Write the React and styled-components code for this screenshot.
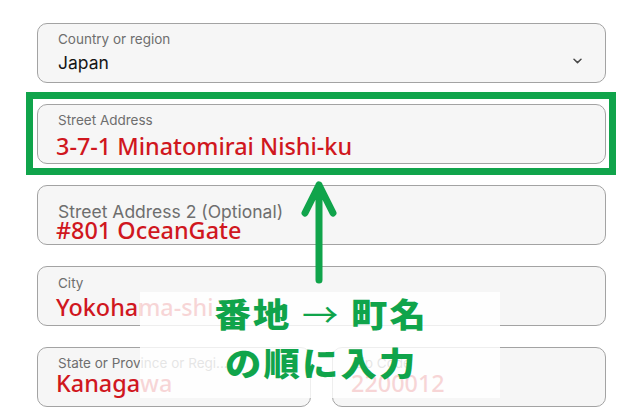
import React from 'react'
import styled, { createGlobalStyle } from 'styled-components'

const GlobalStyle = createGlobalStyle`
    html, body {
        margin: 0;
        padding: 0;
        background: #ffffff;
    }
    body {
        font-family: Inter, "Liberation Sans", sans-serif;
    }
`

const Page = styled.div`
    position: relative;
    width: 640px;
    height: 419px;
    overflow: hidden;
    padding: 23px 0 0 37px;
    box-sizing: border-box;
`

const Form = styled.div`
    width: 569px;
    display: flex;
    flex-direction: column;
    gap: 21px;
`

const Field = styled.div`
    height: 60px;
    box-sizing: border-box;
    border: 1px solid #a3a3a3;
    border-radius: 10px;
    background-color: #f6f6f6;
    padding: ${p => p.$pt}px 20px 0 20px;
    display: flex;
    flex-direction: column;
    overflow: hidden;
`

const SelectField = styled(Field)`
    flex-direction: row;
    align-items: flex-start;
    padding-right: 23px;
`

const FieldBody = styled.div`
    display: flex;
    flex-direction: column;
    flex: 1;
`

const Label = styled.div`
    font-family: Inter, "Liberation Sans", sans-serif;
    font-size: ${p => (p.$big ? 17.5 : 13.5)}px;
    line-height: ${p => (p.$big ? 20 : 16)}px;
    color: #6e6e6e;
    white-space: nowrap;
`

const Value = styled.div`
    font-family: Inter, "Liberation Sans", sans-serif;
    font-size: 17.5px;
    line-height: 22px;
    color: #151515;
    margin-top: 5px;
`

const Entry = styled.div`
    font-family: "Noto Sans", "Liberation Sans", sans-serif;
    font-size: 23.4px;
    font-weight: 500;
    line-height: 28px;
    color: #d0171e;
    margin-top: ${p => p.$mt}px;
    margin-left: -2px;
    white-space: nowrap;
`

const Chevron = styled.svg`
    width: 9px;
    height: 6px;
    margin-top: 27px;
    flex: none;
`

const Highlight = styled.div`
    position: relative;
`

const Frame = styled.div`
    position: absolute;
    top: -12px;
    right: -10px;
    bottom: -11px;
    left: -11px;
    border: 7px solid #10a44b;
    pointer-events: none;
`

const Row = styled.div`
    display: grid;
    grid-template-columns: 1fr 1fr;
    gap: 21px;
`

const UpArrow = styled.svg`
    position: absolute;
    left: 299px;
    top: 179px;
    width: 40px;
    height: 108px;
`

const Callout = styled.div`
    position: absolute;
    left: 140px;
    top: 292px;
    width: 360px;
    height: 106px;
    background: rgba(255, 255, 255, 0.82);
    display: flex;
    flex-direction: column;
    align-items: center;
`

const Message = styled.div`
    margin-top: -3px;
    font-family: "Noto Sans CJK JP", "Noto Sans", sans-serif;
    font-weight: 900;
    font-size: 33px;
    line-height: 49px;
    letter-spacing: 2px;
    padding-left: 2px;
    color: #10a44b;
    text-align: center;
    white-space: nowrap;
    transform: scaleX(1.1);
`

const ThinArrow = styled.span`
    font-weight: 400;
`

const App = () => {
    return (
        <>
            <GlobalStyle />
            <Page>
                <Form>
                    <SelectField $pt={7}>
                        <FieldBody>
                            <Label>Country or region</Label>
                            <Value>Japan</Value>
                        </FieldBody>
                        <Chevron viewBox="0 0 9 6">
                            <path d="M1 1.2 L4.5 4.6 L8 1.2" fill="none" stroke="#4a4a4a" strokeWidth="1.5" strokeLinecap="round" strokeLinejoin="round" />
                        </Chevron>
                    </SelectField>
                    <Highlight>
                        <Field $pt={7}>
                            <Label>Street Address</Label>
                            <Entry $mt={4}>3-7-1 Minatomirai Nishi-ku</Entry>
                        </Field>
                        <Frame />
                    </Highlight>
                    <Field $pt={16}>
                        <Label $big>Street Address 2 (Optional)</Label>
                        <Entry $mt={-6}>#801 OceanGate</Entry>
                    </Field>
                    <Field $pt={8}>
                        <Label>City</Label>
                        <Entry $mt={2}>Yokohama-shi</Entry>
                    </Field>
                    <Row>
                        <Field $pt={7}>
                            <Label>State or Province or Regi...</Label>
                            <Entry $mt={-2}>Kanagawa</Entry>
                        </Field>
                        <Field $pt={7}>
                            <Label>Zip Code</Label>
                            <Entry $mt={-2}>2200012</Entry>
                        </Field>
                    </Row>
                </Form>
                <UpArrow viewBox="0 0 40 108">
                    <path d="M20 6 V101 M6 34 L20 6 L34 34" fill="none" stroke="#10a44b" strokeWidth="7" strokeLinecap="round" strokeLinejoin="round" />
                </UpArrow>
                <Callout>
                    <Message>
                        <div>番地 <ThinArrow>→</ThinArrow> 町名</div>
                        <div>の順に入力</div>
                    </Message>
                </Callout>
            </Page>
        </>
    )
}

export default App
